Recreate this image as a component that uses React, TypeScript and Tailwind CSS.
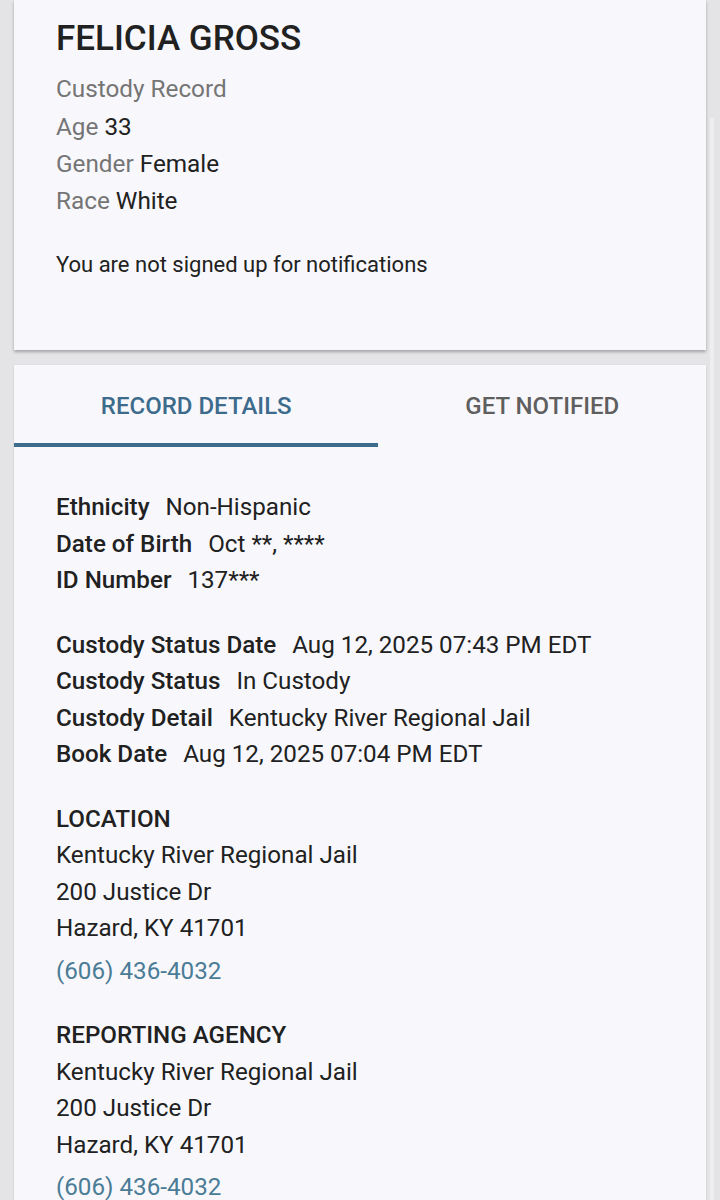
import React from "react";

const detailGroups: { label: string; value: string }[][] = [
    [
        { label: "Ethnicity", value: "Non-Hispanic" },
        { label: "Date of Birth", value: "Oct **, ****" },
        { label: "ID Number", value: "137***" },
    ],
    [
        { label: "Custody Status Date", value: "Aug 12, 2025 07:43 PM EDT" },
        { label: "Custody Status", value: "In Custody" },
        { label: "Custody Detail", value: "Kentucky River Regional Jail" },
        { label: "Book Date", value: "Aug 12, 2025 07:04 PM EDT" },
    ],
];

const Address = ({ title, first }: { title: string; first?: boolean }) => (
    <div className={first ? "mt-[28px]" : "mt-[28px]"}>
        <div className="font-medium leading-[36.5px]">{title}</div>
        <div className="leading-[36.5px]">Kentucky River Regional Jail</div>
        <div className="leading-[36.5px]">200 Justice Dr</div>
        <div className="leading-[36.5px]">Hazard, KY 41701</div>
        <a className="block mt-[6px] leading-[36.5px] text-[#4b7c96]">(606) 436-4032</a>
    </div>
);

export default function App() {
    return (
        <div className="relative min-h-screen bg-[#e4e4e6] px-[14px] text-[#212121]" style={{ fontFamily: "Roboto, 'Liberation Sans', sans-serif" }}>
            <div className="bg-[#f8f8fc] pl-[42px] pt-[18px] pb-[70px] shadow-[0_2px_3px_rgba(0,0,0,0.28)]">
                <h1 className="text-[35px] leading-[42px] font-medium">FELICIA GROSS</h1>
                <div className="mt-[10px] text-[24.3px] leading-[37px]">
                    <div className="text-[#757575]">Custody Record</div>
                    <div className="mt-[1px]"><span className="text-[#757575]">Age</span> 33</div>
                    <div><span className="text-[#757575]">Gender</span> Female</div>
                    <div><span className="text-[#757575]">Race</span> White</div>
                </div>
                <p className="mt-[31px] text-[22px] leading-[30px]">You are not signed up for notifications</p>
            </div>

            <div className="mt-[15px] bg-[#f8f8fc] shadow-[0_1px_2px_rgba(0,0,0,0.15)]">
                <div className="flex h-[82px] text-[24px] font-medium">
                    <button className="flex-auto flex items-center justify-center border-b-[4px] border-[#3d6b8c] pt-[4px] text-[#3d6b8c]">
                        RECORD DETAILS
                    </button>
                    <button className="flex-auto flex items-center justify-center text-[#5f5f5f]">
                        GET NOTIFIED
                    </button>
                </div>

                <div className="pl-[42px] pt-[42px] pb-[40px] text-[24.2px]">
                    {detailGroups.map((group, gi) => (
                        <div key={gi} className={gi > 0 ? "mt-[28px]" : ""}>
                            {group.map((row) => (
                                <div key={row.label} className="flex gap-[16px] leading-[36.5px]">
                                    <span className="font-medium">{row.label}</span>
                                    <span>{row.value}</span>
                                </div>
                            ))}
                        </div>
                    ))}
                    <Address title="LOCATION" first />
                    <Address title="REPORTING AGENCY" />
                </div>
            </div>

            <div className="absolute right-[6px] top-[118px] bottom-0 w-[4px] bg-[#eeeef0]" />
        </div>
    );
}
